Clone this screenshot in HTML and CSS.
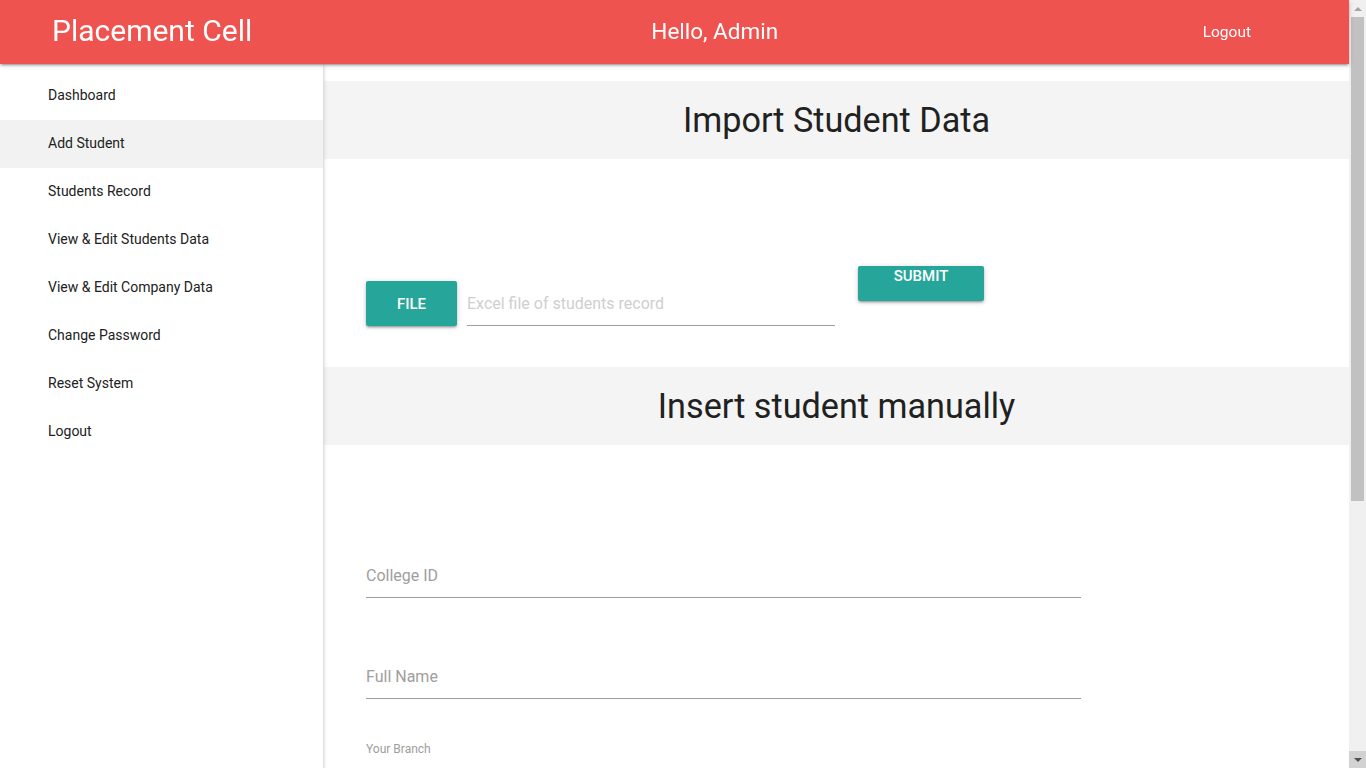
FILE: index.html
```html
<!DOCTYPE html>
<html lang="en">
<head>
<meta charset="utf-8">
<title>Placement Cell - Add Student</title>
<link rel="stylesheet" href="styles.css">
</head>
<body>
<div class="app">
  <header class="topbar">
    <a class="brand" href="#">Placement Cell</a>
    <span class="greeting">Hello, Admin</span>
    <a class="top-logout" href="#">Logout</a>
  </header>
  <div class="layout">
    <nav class="sidenav">
      <a class="nav-item" href="#">Dashboard</a>
      <a class="nav-item active" href="#">Add Student</a>
      <a class="nav-item" href="#">Students Record</a>
      <a class="nav-item" href="#">View &amp; Edit Students Data</a>
      <a class="nav-item" href="#">View &amp; Edit Company Data</a>
      <a class="nav-item" href="#">Change Password</a>
      <a class="nav-item" href="#">Reset System</a>
      <a class="nav-item" href="#">Logout</a>
    </nav>
    <main class="main">
      <h4 class="band">Import Student Data</h4>
      <section class="import">
        <div class="file-field">
          <span class="btn btn-file">FILE</span>
          <div class="file-path">Excel file of students record</div>
        </div>
        <button class="btn btn-submit">SUBMIT</button>
      </section>
      <h4 class="band">Insert student manually</h4>
      <section class="manual">
        <div class="input-field"><span class="placeholder">College ID</span></div>
        <div class="input-field"><span class="placeholder">Full Name</span></div>
        <div class="select-field">
          <span class="small-label">Your Branch</span>
        </div>
      </section>
    </main>
  </div>
</div>
<div class="scrollbar" aria-hidden="true">
  <div class="sb-btn sb-up"><span class="tri-up"></span></div>
  <div class="sb-track"><div class="sb-thumb"></div></div>
  <div class="sb-btn sb-down"><span class="tri-down"></span></div>
</div>
</body>
</html>
```

FILE: styles.css
```css
html, body {
  margin: 0;
  padding: 0;
  height: 100%;
  overflow: hidden;
}
body {
  font-family: Roboto, "Liberation Sans", Arial, sans-serif;
  color: rgba(0, 0, 0, 0.87);
  background: #fff;
}
a { text-decoration: none; color: inherit; }

.app {
  width: calc(100% - 17px);
  height: 100%;
  display: flex;
  flex-direction: column;
}

/* fake classic scrollbar overlay */
.scrollbar {
  position: fixed;
  top: 0;
  right: 0;
  width: 17px;
  height: 100vh;
  background: #f0f0f0;
  display: flex;
  flex-direction: column;
}
.sb-btn {
  height: 17px;
  flex: none;
  display: flex;
  align-items: center;
  justify-content: center;
}
.sb-down { background: #d2d2d2; }
.tri-up {
  width: 0;
  height: 0;
  border-left: 4px solid transparent;
  border-right: 4px solid transparent;
  border-bottom: 4px solid #a3a3a3;
}
.tri-down {
  width: 0;
  height: 0;
  border-left: 4px solid transparent;
  border-right: 4px solid transparent;
  border-top: 4px solid #505050;
}
.sb-track {
  flex: 1;
  padding: 0 2px;
}
.sb-thumb {
  height: 484px;
  background: #c1c1c1;
}

.topbar {
  position: relative;
  z-index: 2;
  height: 64px;
  flex: none;
  background: #ef5350;
  color: #fff;
  display: flex;
  align-items: center;
  padding: 0 98px 0 52px;
  box-shadow: 0 2px 2px 0 rgba(0,0,0,0.14), 0 3px 1px -2px rgba(0,0,0,0.12), 0 1px 5px 0 rgba(0,0,0,0.2);
}
.brand {
  font-size: 30px;
  flex: 1;
  margin-top: -3px;
}
.greeting {
  font-size: 22.5px;
  flex: 1;
  padding-left: 48px;
  margin-top: -2px;
}
.top-logout {
  font-size: 15.5px;
  font-weight: 400;
}

.layout {
  flex: 1;
  display: flex;
  align-items: stretch;
}
.sidenav {
  width: 323px;
  flex: none;
  padding-top: 8px;
  background: #fff;
  position: relative;
  z-index: 1;
  box-shadow: 0 2px 2px 0 rgba(0,0,0,0.14), 0 3px 1px -2px rgba(0,0,0,0.12), 0 1px 5px 0 rgba(0,0,0,0.2);
}
.nav-item {
  display: block;
  height: 48px;
  line-height: 46px;
  padding: 0 48px;
  font-size: 14px;
  font-weight: 400;
  color: #212121;
}
.nav-item.active { background: #f2f2f2; }

.main {
  flex: 1;
  padding-top: 17px;
  padding-left: 1px;
}
.band {
  margin: 0;
  height: 78px;
  line-height: 78px;
  background: #f4f4f4;
  text-align: center;
  font-size: 34.2px;
  font-weight: 400;
  color: #212121;
}

.import {
  height: 208px;
  display: flex;
  align-items: flex-start;
  padding-left: 42px;
}
.file-field {
  display: flex;
  align-items: flex-end;
  margin-top: 122px;
  width: 469px;
}
.btn {
  display: inline-flex;
  justify-content: center;
  background: #26a69a;
  color: #fff;
  font-family: Roboto, "Liberation Sans", Arial, sans-serif;
  font-size: 15px;
  font-weight: 500;
  border: 0;
  border-radius: 2px;
  box-shadow: 0 2px 2px 0 rgba(0,0,0,0.14), 0 3px 1px -2px rgba(0,0,0,0.12), 0 1px 5px 0 rgba(0,0,0,0.2);
}
.btn-file {
  width: 91px;
  height: 45px;
  align-items: center;
}
.file-path {
  flex: 1;
  margin-left: 10px;
  height: 44px;
  line-height: 46px;
  border-bottom: 1px solid #9e9e9e;
  color: #cfcfcf;
  font-size: 16px;
}
.btn-submit {
  margin-top: 107px;
  margin-left: 23px;
  width: 126px;
  height: 35px;
  line-height: 20px;
  padding: 0;
  align-items: flex-start;
}

.manual {
  padding: 105px 0 40px 42px;
}
.input-field {
  width: 715px;
  height: 43px;
  padding-top: 4px;
  border-bottom: 1px solid #9e9e9e;
  display: flex;
  align-items: center;
  margin-bottom: 53px;
}
.placeholder {
  font-size: 16px;
  color: #9e9e9e;
}
.select-field {
  width: 715px;
}
.small-label {
  display: block;
  margin-top: -10px;
  font-size: 12px;
  color: #9e9e9e;
}
```
